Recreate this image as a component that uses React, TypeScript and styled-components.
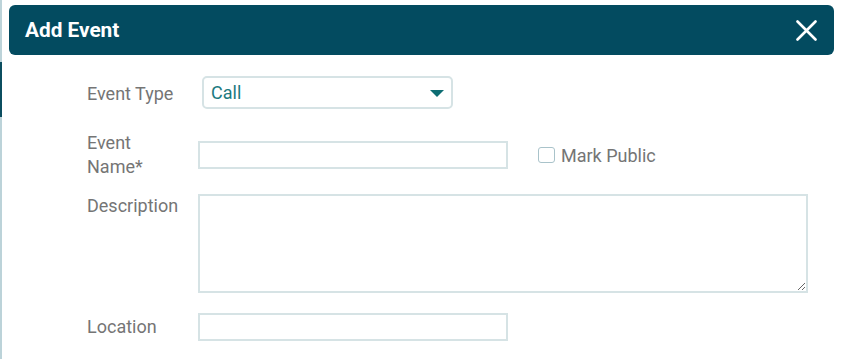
import React, { useState } from 'react';
import styled, { createGlobalStyle } from 'styled-components';

const GlobalStyle = createGlobalStyle`
  html, body {
    margin: 0;
    padding: 0;
    background: #ffffff;
  }
  body {
    font-family: Roboto, "Liberation Sans", Arial, sans-serif;
  }
`;

const Page = styled.div`
  display: flex;
  width: 841px;
  height: 359px;
  overflow: hidden;
`;

// the page behind the dialog peeks through on the left
const Edge = styled.div`
  flex: 0 0 2px;
  background: linear-gradient(
    to bottom,
    #bcd3d9 0px,
    #bcd3d9 62px,
    #0b4d5f 62px,
    #0b4d5f 117px,
    #bcd3d9 117px,
    #bcd3d9 100%
  );
`;

const Dialog = styled.div`
  flex: 1;
  padding: 5px 7px 0 7px;
`;

const Header = styled.div`
  display: flex;
  align-items: center;
  justify-content: space-between;
  height: 50px;
  padding: 0 16px 0 16px;
  border-radius: 6px;
  background: #034b60;
`;

const Title = styled.h2`
  margin: 0;
  font-size: 20.8px;
  font-weight: 700;
  color: #ffffff;
`;

const CloseButton = styled.button`
  display: flex;
  align-items: center;
  justify-content: center;
  width: 22px;
  height: 22px;
  padding: 0;
  margin-right: 1px;
  border: none;
  background: transparent;
  cursor: pointer;
`;

const Form = styled.form`
  display: flex;
  flex-direction: column;
  padding-left: 78px;
`;

const Row = styled.div<{ $top: number; $align?: string }>`
  display: flex;
  align-items: ${p => p.$align || 'center'};
  margin-top: ${p => p.$top}px;
`;

const Label = styled.label<{ $nudge?: number }>`
  flex: 0 0 111px;
  box-sizing: border-box;
  padding-right: 15px;
  padding-top: ${p => p.$nudge || 0}px;
  font-size: 18px;
  line-height: 24px;
  color: #757575;
`;

const SelectBox = styled.div`
  position: relative;
  display: flex;
  align-items: center;
  box-sizing: border-box;
  width: 251px;
  height: 33px;
  margin-left: 4px;
  padding: 0 7px;
  border: 2px solid #d6e3e5;
  border-radius: 5px;
  font-size: 18px;
  color: #1c7a80;
`;

const Caret = styled.span`
  position: absolute;
  right: 7px;
  top: 12px;
  width: 0;
  height: 0;
  border-left: 7.5px solid transparent;
  border-right: 7.5px solid transparent;
  border-top: 7px solid #0e6d73;
`;

const TextInput = styled.input<{ $width: number }>`
  box-sizing: border-box;
  width: ${p => p.$width}px;
  height: 28px;
  margin: 0;
  padding: 2px 6px;
  border: 2px solid #d6e3e5;
  border-radius: 0;
  outline: none;
  font-family: inherit;
  font-size: 18px;
  color: #333;
`;

const TextArea = styled.textarea`
  box-sizing: border-box;
  width: 610px;
  height: 99px;
  margin: 0;
  padding: 4px 6px;
  border: 2px solid #d6e3e5;
  border-radius: 0;
  outline: none;
  resize: both;
  font-family: inherit;
  font-size: 18px;
`;

const CheckLabel = styled.label`
  display: flex;
  align-items: center;
  margin-left: 30px;
  font-size: 18px;
  color: #757575;
  cursor: pointer;
`;

const CheckBox = styled.span<{ $checked: boolean }>`
  box-sizing: border-box;
  width: 17px;
  height: 16px;
  margin-right: 6px;
  border: 1px solid #a9c3ca;
  border-radius: 3px;
  background: ${p => (p.$checked ? '#034b60' : '#fff')};
`;

export default function App() {
  const [name, setName] = useState('');
  const [description, setDescription] = useState('');
  const [location, setLocation] = useState('');
  const [isPublic, setIsPublic] = useState(false);

  return (
    <>
      <GlobalStyle />
      <Page>
        <Edge />
        <Dialog>
          <Header>
            <Title>Add Event</Title>
            <CloseButton type="button" aria-label="Close">
              <svg width="21" height="21" viewBox="0 0 21 21">
                <path
                  d="M1.5 1.5 L19.5 19.5 M19.5 1.5 L1.5 19.5"
                  stroke="#ffffff"
                  strokeWidth="2.6"
                  strokeLinecap="round"
                />
              </svg>
            </CloseButton>
          </Header>

          <Form onSubmit={e => e.preventDefault()}>
            <Row $top={21}>
              <Label $nudge={3}>Event Type</Label>
              <SelectBox>
                Call
                <Caret />
              </SelectBox>
            </Row>

            <Row $top={22}>
              <Label>Event Name*</Label>
              <TextInput
                $width={310}
                value={name}
                onChange={e => setName(e.target.value)}
              />
              <CheckLabel onClick={() => setIsPublic(!isPublic)}>
                <CheckBox $checked={isPublic} />
                Mark Public
              </CheckLabel>
            </Row>

            <Row $top={15} $align="flex-start">
              <Label>Description</Label>
              <TextArea
                value={description}
                onChange={e => setDescription(e.target.value)}
              />
            </Row>

            <Row $top={20}>
              <Label>Location</Label>
              <TextInput
                $width={310}
                value={location}
                onChange={e => setLocation(e.target.value)}
              />
            </Row>
          </Form>
        </Dialog>
      </Page>
    </>
  );
}
